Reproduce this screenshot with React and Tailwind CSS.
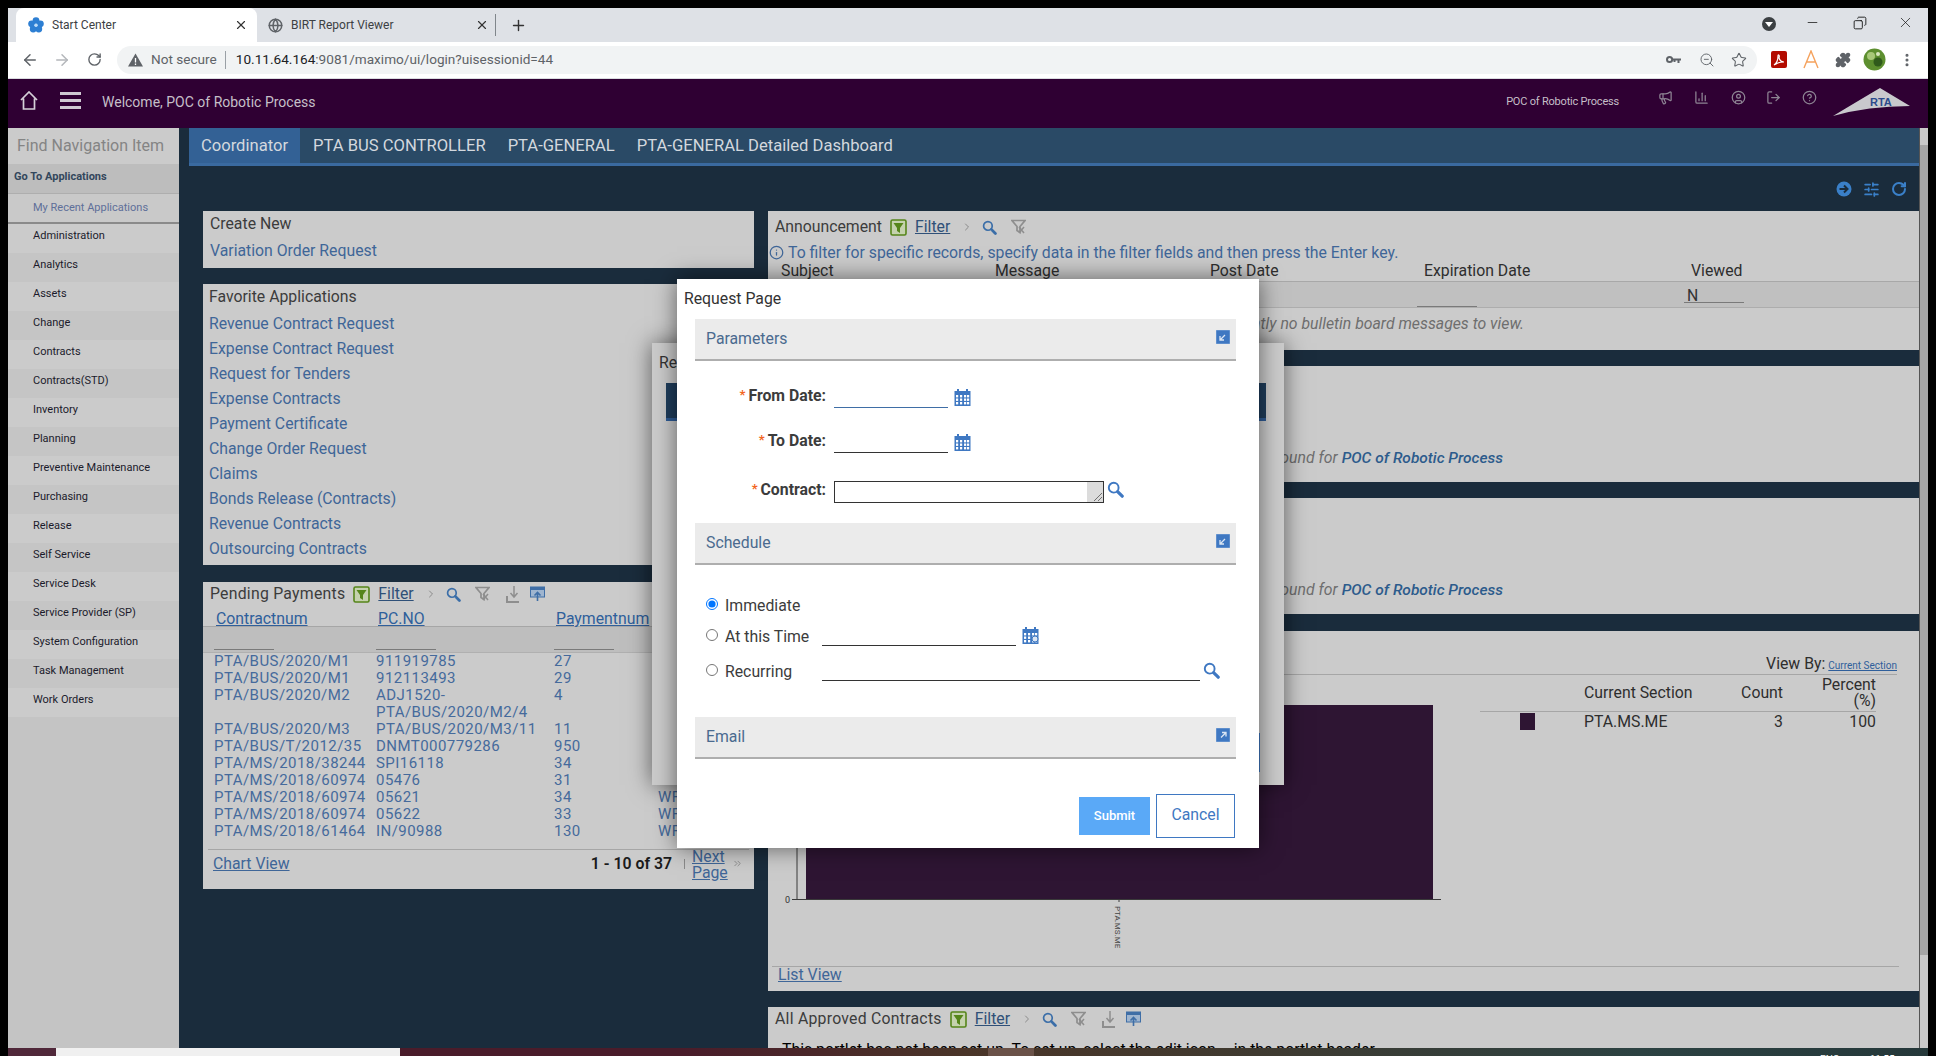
import { ArrowLeft, ArrowRight, RotateCw, Star, Puzzle, EllipsisVertical, X, Plus, Minus, Globe, ZoomOut, Megaphone, ChartColumn, CircleUser, LogOut, CircleHelp, SlidersHorizontal, Info, ChevronRight, ChevronsRight, Copy } from 'lucide-react';

const navItems = ['Administration', 'Analytics', 'Assets', 'Change', 'Contracts', 'Contracts(STD)', 'Inventory', 'Planning', 'Preventive Maintenance', 'Purchasing', 'Release', 'Self Service', 'Service Desk', 'Service Provider (SP)', 'System Configuration', 'Task Management', 'Work Orders'];

const favorites = ['Revenue Contract Request', 'Expense Contract Request', 'Request for Tenders', 'Expense Contracts', 'Payment Certificate', 'Change Order Request', 'Claims', 'Bonds Release (Contracts)', 'Revenue Contracts', 'Outsourcing Contracts'];

const payments = [
  ['PTA/BUS/2020/M1', '911919785', '27', ''],
  ['PTA/BUS/2020/M1', '912113493', '29', ''],
  ['PTA/BUS/2020/M2', 'ADJ1520-', '4', ''],
  ['', 'PTA/BUS/2020/M2/4', '', ''],
  ['PTA/BUS/2020/M3', 'PTA/BUS/2020/M3/11', '11', ''],
  ['PTA/BUS/T/2012/35', 'DNMT000779286', '950', ''],
  ['PTA/MS/2018/38244', 'SPI16118', '34', ''],
  ['PTA/MS/2018/60974', '05476', '31', 'WF'],
  ['PTA/MS/2018/60974', '05621', '34', 'WF'],
  ['PTA/MS/2018/60974', '05622', '33', 'WF'],
  ['PTA/MS/2018/61464', 'IN/90988', '130', 'WF'],
];

function FilterIcon() {
  return (
    <svg width="17" height="17" viewBox="0 0 17 17" className="shrink-0">
      <rect x="1" y="1" width="15" height="15" rx="1.5" fill="#c5d2ae" stroke="#55851a" strokeWidth="1.6" />
      <path d="M3.5 4h10L10 9v5l-3-2V9z" fill="#55851a" />
    </svg>
  );
}

function SearchIcon({ color = '#3b6ea8', size = 16 }) {
  return (
    <svg width={size} height={size} viewBox="0 0 16 16" className="shrink-0">
      <circle cx="6.3" cy="6.3" r="4.6" fill="none" stroke={color} strokeWidth="1.8" />
      <path d="M10 10l4.3 4.3" stroke={color} strokeWidth="3" strokeLinecap="round" />
    </svg>
  );
}

function ClearFilterIcon() {
  return (
    <svg width="15" height="16" viewBox="0 0 15 16" className="shrink-0">
      <path d="M1 1.5h13L9 7.5v6l-3-2v-4z" fill="none" stroke="#8e8e8e" strokeWidth="1.7" />
      <path d="M8 8l5 6M13 8l-5 6" stroke="#8e8e8e" strokeWidth="1.5" />
    </svg>
  );
}

function DownloadIcon() {
  return (
    <svg width="14" height="17" viewBox="0 0 14 17" className="shrink-0">
      <path d="M8 0v10M4.5 7L8 11l3.5-4" fill="none" stroke="#8e8e8e" strokeWidth="1.5" />
      <path d="M1 10v6h12" fill="none" stroke="#8e8e8e" strokeWidth="2" />
    </svg>
  );
}

function ExportIcon() {
  return (
    <svg width="15" height="16" viewBox="0 0 15 16" className="shrink-0">
      <rect x="0.5" y="1" width="14" height="10" fill="#9fb5cf" stroke="#3f6ea6" />
      <rect x="0.5" y="1" width="14" height="3" fill="#3f6ea6" />
      <path d="M7.5 15V7M4.5 9.5l3-3 3 3" fill="none" stroke="#3f6ea6" strokeWidth="1.6" />
    </svg>
  );
}

function CalendarIcon({ check }) {
  return (
    <svg width="17" height="17" viewBox="0 0 17 17" className="shrink-0">
      <rect x="0.5" y="2" width="16" height="15" fill="#3f78c2" />
      <rect x="3" y="0" width="2" height="4" fill="#3f78c2" />
      <rect x="12" y="0" width="2" height="4" fill="#3f78c2" />
      {[2, 6, 10, 13].map((x) => [6, 9.5, 13].map((y) => <rect key={`${x}-${y}`} x={x} y={y} width="2.2" height="2.4" fill="#fff" />))}
      {check && <circle cx="13" cy="12" r="3" fill="#dbe6f4" stroke="#3f78c2" />}
    </svg>
  );
}

function CollapseIcon({ open }) {
  return (
    <svg width="14" height="14" viewBox="0 0 14 14">
      <rect width="14" height="14" fill="#3f78c2" stroke="#a9c3e3" strokeWidth="0.6" />
      {open ? <path d="M5 9.5l4.5-4.5M6 4.5h4v4" fill="none" stroke="#dbe6f4" strokeWidth="1.3" /> : <path d="M9 5L4.5 9.5M4 6v4h4" fill="none" stroke="#dbe6f4" strokeWidth="1.3" />}
    </svg>
  );
}

function Flower() {
  return (
    <svg width="16" height="16" viewBox="0 0 16 16" className="shrink-0">
      {[[8, 3.6], [12.4, 6.8], [10.8, 12], [5.2, 12], [3.6, 6.8]].map(([cx, cy]) => <circle key={cx + cy} cx={cx} cy={cy} r="3.4" fill="#2d7fd3" />)}
      <circle cx="8" cy="8.2" r="1.7" fill="#bcdcf8" />
    </svg>
  );
}

function ChromeBar() {
  return (
    <>
      <div className="flex h-[34px] items-end bg-[#dee1e6] pl-2 text-[12px] text-[#3c4043]">
        <div className="flex h-[34px] w-[241px] items-center rounded-t-lg bg-white pl-3 pr-[9px]">
          <Flower />
          <span className="ml-[8px] flex-1">Start Center</span>
          <X size={14} strokeWidth={2} color="#333" />
        </div>
        <div className="flex h-[34px] w-[238px] items-center pl-[11px] pr-[6px]">
          <Globe size={15} strokeWidth={2.4} color="#5f6368" />
          <span className="ml-[8px] flex-1">BIRT Report Viewer</span>
          <X size={14} strokeWidth={2} color="#333" />
        </div>
        <div className="mb-[6px] h-[22px] w-px bg-[#80868b]" />
        <Plus size={17} strokeWidth={2} color="#333" className="mb-[8px] ml-[14px]" />
        <div className="ml-auto flex items-center self-start pt-[6px]">
          <div className="mt-[3px] flex h-[14px] w-[14px] items-center justify-center rounded-full bg-[#3c4043]">
            <div className="h-0 w-0 border-x-[4px] border-t-[5px] border-x-transparent border-t-white" />
          </div>
          <Minus size={15} strokeWidth={1.2} color="#111" className="ml-[29px]" />
          <Copy size={14} strokeWidth={1.5} color="#111" className="ml-[33px] -scale-x-100" />
          <X size={17} strokeWidth={1} color="#111" className="ml-[30px] mr-[14px]" />
        </div>
      </div>
      <div className="flex h-[37px] items-center border-b border-[#dadce0] bg-white pb-px">
        <ArrowLeft size={18} color="#5f6368" strokeWidth={2} className="ml-[13px]" />
        <ArrowRight size={18} color="#b4b7bb" strokeWidth={2} className="ml-[14px]" />
        <RotateCw size={15} color="#5f6368" strokeWidth={2.2} className="ml-[16px]" />
        <div className="ml-[15px] flex h-[28px] w-[1640px] items-center rounded-full bg-[#f1f3f4] pl-[11px] text-[13.6px]">
          <svg width="15" height="14" viewBox="0 0 15 14"><path d="M7.5 0.5L15 13.5H0z" fill="#5f6368" /><path d="M7.5 5v4.5M7.5 10.5v1.5" stroke="#fff" strokeWidth="1.3" /></svg>
          <span className="ml-[8px] text-[#5f6368]">Not secure</span>
          <div className="ml-[8px] h-[18px] w-px bg-[#9aa0a6]" />
          <span className="ml-[10px] text-[#202124]">10.11.64.164</span>
          <span className="text-[#5f6368]">:9081/maximo/ui/login?uisessionid=44</span>
          <div className="ml-auto flex items-center pr-[10px]">
            <svg width="15" height="9" viewBox="0 0 15 9"><circle cx="3.6" cy="4.5" r="2.6" fill="none" stroke="#5f6368" strokeWidth="2" /><path d="M6 3.5h9v2h-1.5v2.5h-2V5.5H9.5v1.5h-2v-1.5H6z" fill="#5f6368" /></svg>
            <ZoomOut size={16} color="#5f6368" strokeWidth={1.4} className="ml-[18px]" />
            <Star size={16} color="#5f6368" strokeWidth={1.6} className="ml-[16px]" />
          </div>
        </div>
        <div className="ml-[14px] flex h-[17px] w-[16px] items-center justify-center rounded-[2px] bg-[#b30b00]">
          <svg width="12" height="12" viewBox="0 0 12 12"><path d="M1 11c3-2 4-6 4-9 0-2 2-1 1 2 1 3 3 4 5 4-2 0-5 0-8 2z" fill="none" stroke="#fff" strokeWidth="1.2" /></svg>
        </div>
        <svg width="16" height="19" viewBox="0 0 16 19" className="ml-[16px]"><path d="M1 18L8 1l7 17M4 12h8" fill="none" stroke="#f5a25d" strokeWidth="1.4" /></svg>
        <Puzzle size={16} color="#5f6368" fill="#5f6368" className="ml-[16px]" />
        <svg width="23" height="23" viewBox="0 0 23 23" className="ml-[12px]">
          <circle cx="11.5" cy="11.5" r="11" fill="#5d8f2f" />
          <circle cx="8" cy="8" r="4" fill="#a7c878" />
          <circle cx="15" cy="14" r="4.5" fill="#2f5a1b" />
          <circle cx="15" cy="6" r="2" fill="#d7e6bd" />
        </svg>
        <EllipsisVertical size={16} color="#5f6368" strokeWidth={2.6} className="ml-[13px]" />
      </div>
    </>
  );
}

function AppHeader() {
  return (
    <div className="flex h-[49px] items-center bg-[#2f0033] text-[#c5bfc8]">
      <svg width="18" height="19" viewBox="0 0 18 19" className="mb-[6px] ml-[12px]"><path d="M1 9l8-8 8 8M3.5 7.5V18h11V7.5" fill="none" stroke="#d5d0d8" strokeWidth="1.7" /></svg>
      <div className="mb-[6px] ml-[22px] flex w-[21px] flex-col gap-[4px]">
        <div className="h-[3px] bg-[#cfc9d2]" /><div className="h-[3px] bg-[#cfc9d2]" /><div className="h-[3px] bg-[#cfc9d2]" />
      </div>
      <span className="mb-[2px] ml-[21px] text-[14px]">Welcome, POC of Robotic Process</span>
      <span className="mb-[2px] ml-auto text-[11px] tracking-[-0.2px]">POC of Robotic Process</span>
      <Megaphone size={15} color="#8e8494" className="mb-[13px] ml-[39px]" />
      <ChartColumn size={15} color="#8e8494" className="mb-[13px] ml-[21px]" />
      <CircleUser size={15} color="#8e8494" className="mb-[13px] ml-[22px]" />
      <LogOut size={15} color="#8e8494" className="mb-[13px] ml-[20px]" />
      <CircleHelp size={15} color="#8e8494" className="mb-[13px] ml-[21px]" />
      <svg width="78" height="28" viewBox="0 0 78 28" className="mb-[4px] ml-[16px] mr-[17px]">
        <path d="M0 28Q30 10 47 0L77 18Q35 18 0 28z" fill="#c9c9cd" />
        <text x="37" y="18" fontSize="11" fontWeight="700" fill="#2c4a8c" fontFamily="Liberation Sans, sans-serif">RTA</text>
      </svg>
    </div>
  );
}

function Sidebar() {
  return (
    <aside className="flex w-[171px] shrink-0 flex-col bg-[#c4c4c4]">
      <div className="flex h-[36px] items-center bg-[#cbcbcb] pl-[9px] text-[16px] text-[#848484]">Find Navigation Item</div>
      <div className="flex h-[30px] items-center border-b border-[#aeaeae] bg-[#bdbdbd] pb-[2px] pl-[6px] text-[11px] font-bold text-[#33475c]">Go To Applications</div>
      <div className="flex h-[30px] items-center border-b-2 border-[#8a8a8a] bg-[#c9c9c9] pl-[25px] text-[11px] text-[#5e6f99]">My Recent Applications</div>
      {navItems.map((name, i) => (
        <div key={name} className={`flex h-[29px] items-center pb-[4px] pl-[25px] text-[11px] text-[#1b1b2b] ${i % 2 === 0 ? 'bg-[#cbcbcb]' : 'bg-[#c5c5c5]'}`}>{name}</div>
      ))}
    </aside>
  );
}

function PortletTitle({ title, extra }) {
  return (
    <div className="flex h-[24px] items-center text-[15.8px] text-[#3c3c3c]">
      <span className={extra ? 'tracking-[0.25px]' : ''}>{title}</span>
      <span className="ml-[8px]"><FilterIcon /></span>
      <span className="ml-[8px] text-[#2f5078] underline">Filter</span>
      <ChevronRight size={12} color="#8a8a8a" className="ml-[11px]" />
      <span className="ml-[9px]"><SearchIcon size={15} /></span>
      <span className="ml-[14px]"><ClearFilterIcon /></span>
      {extra && <span className="ml-[16px]"><DownloadIcon /></span>}
      {extra && <span className="ml-[10px]"><ExportIcon /></span>}
    </div>
  );
}

function LeftColumn() {
  return (
    <div className="flex w-[551px] shrink-0 flex-col">
      <section className="h-[57px] shrink-0 bg-[#cbcbcb] pl-[7px] pt-[3px]">
        <div className="flex h-[20px] items-center text-[15.8px] text-[#3c3c3c]">Create New</div>
        <div className="mt-[7px] text-[15.8px] leading-[20px] text-[#3f6698]">Variation Order Request</div>
      </section>
      <section className="mt-[16px] h-[281px] shrink-0 bg-[#cbcbcb] pl-[6px] pt-[3px]">
        <div className="flex h-[20px] items-center text-[15.8px] text-[#3c3c3c]">Favorite Applications</div>
        <div className="mt-[4px] flex flex-col">
          {favorites.map((name) => <div key={name} className="h-[25px] text-[15.8px] leading-[25px] text-[#3f6698]">{name}</div>)}
        </div>
      </section>
      <section className="mt-[17px] flex h-[307px] shrink-0 flex-col bg-[#cbcbcb] text-[15.8px]">
        <div className="h-[25px] pl-[7px]"><PortletTitle title="Pending Payments" extra /></div>
        <div className="grid h-[20px] grid-cols-[162px_178px_104px] items-center border-b border-[#a6a6a6] pb-[2px] pl-[13px] text-[#2f5f9b] underline">
          <span>Contractnum</span><span>PC.NO</span><span>Paymentnum</span>
        </div>
        <div className="grid h-[26px] grid-cols-[162px_178px_104px] items-end border-b border-[#b0b0b0] bg-[#bebebe] pb-[2px] pl-[11px]">
          <div className="w-[60px] border-b border-[#7a7a7a]" /><div className="w-[60px] border-b border-[#7a7a7a]" /><div className="w-[60px] border-b border-[#7a7a7a]" />
        </div>
        <div className="pl-[11px]">
          {payments.map((row, i) => (
            <div key={i} className="grid h-[17px] grid-cols-[162px_178px_104px_60px] text-[15px] leading-[17px] tracking-[0.45px] text-[#456a9c]">
              {row.map((cell, j) => <span key={j} className="whitespace-nowrap">{cell}</span>)}
            </div>
          ))}
        </div>
        <div className="mx-[5px] mt-[9px] flex h-[39px] items-start border-t border-[#a6a6a6] pl-[5px] pt-[3px]">
          <span className="mt-[1px] leading-[20px] text-[#3f6698] underline">Chart View</span>
          <b className="ml-auto mt-[1px] font-semibold leading-[20px] text-[#1a1a1a]">1 - 10 of 37</b>
          <div className="ml-[12px] mt-[6px] h-[10px] w-px bg-[#8a8a8a]" />
          <div className="-mt-[4px] ml-[7px] w-[36px] leading-[16px] text-[#3f6698] underline">Next Page</div>
          <ChevronsRight size={11} color="#8a8a8a" className="ml-[4px] mr-[6px] mt-[5px]" />
        </div>
      </section>
    </div>
  );
}

function NotFound() {
  return (
    <section className="mt-[16px] flex h-[116px] shrink-0 items-end justify-end bg-[#cbcbcb] pb-[12px] pr-[416px] text-[15.8px] leading-[24px] italic text-[#6e6e6e]">
      No records found for&nbsp;<span className="text-[15.5px] font-medium text-[#2c5b8c]">POC of Robotic Process</span>
    </section>
  );
}

function AnnouncementPortlet() {
  return (
    <section className="h-[139px] shrink-0 bg-[#cbcbcb] text-[15.8px]">
      <div className="pl-[7px] pt-[4px]"><PortletTitle title="Announcement" /></div>
      <div className="flex h-[27px] items-center pl-px text-[#3f6698]">
        <Info size={15} color="#3f6698" />
        <span className="ml-[4px]">To filter for specific records, specify data in the filter fields and then press the Enter key.</span>
      </div>
      <div className="grid h-[16px] grid-cols-[214px_215px_214px_267px_200px] items-start border-b border-[#a8a8a8] pl-[13px] leading-[9px] text-[#2e2e2e]">
        <span>Subject</span><span>Message</span><span>Post Date</span><span>Expiration Date</span><span>Viewed</span>
      </div>
      <div className="grid h-[26px] grid-cols-[649px_267px_200px] border-b border-[#adadad] bg-[#c0c0c0]">
        <span />
        <div className="mt-[19px] w-[60px] border-b border-[#7a7a7a]" />
        <div className="h-[21px] w-[60px] border-b border-[#7a7a7a] pl-[3px] leading-[27px] text-[#333]">N</div>
      </div>
      <div className="flex h-[29px] items-center justify-end pr-[395px] pt-[3px] italic text-[#6e6e6e]">There are currently no bulletin board messages to view.</div>
    </section>
  );
}

function ChartPortlet() {
  return (
    <section className="mt-[17px] flex h-[360px] shrink-0 flex-col bg-[#cbcbcb] text-[15.8px]">
      <div className="ml-[8px] mr-[22px] flex h-[44px] shrink-0 items-end justify-end border-b border-[#a6a6a6] leading-[20px] text-[#2e2e2e]">
        <span>View By:</span>
        <span className="ml-[3px] text-[10px] leading-[16px] text-[#2f5f9b] underline">Current Section</span>
      </div>
      <div className="flex h-[291px] shrink-0">
        <svg width="712" height="291" viewBox="0 0 712 291" className="shrink-0">
          <rect x="38" y="30" width="627" height="194" fill="#2e1533" />
          <path d="M29 0V225M24 224.5H673" stroke="#3a3a3a" strokeWidth="1" fill="none" />
          <text x="17" y="228" fontSize="9" fill="#333" fontFamily="Roboto, sans-serif">0</text>
          <path d="M351 225v2" stroke="#3a3a3a" />
          <text transform="translate(347 231) rotate(90)" fontSize="8" fill="#444" fontFamily="Roboto, sans-serif">PTA.MS.ME</text>
        </svg>
        <div className="w-[396px] text-[#2e2e2e]">
          <div className="grid h-[37px] grid-cols-[104px_115px_84px_93px] items-center border-b border-[#a6a6a6] leading-[16px]">
            <span /><span>Current Section</span><span className="text-right">Count</span><span className="text-right">Percent<br />(%)</span>
          </div>
          <div className="mt-px grid h-[17px] grid-cols-[104px_115px_84px_93px] items-center leading-[17px]">
            <div className="ml-[40px] h-[17px] w-[15px] bg-[#2e1533]" />
            <span>PTA.MS.ME</span><span className="text-right">3</span><span className="text-right">100</span>
          </div>
        </div>
      </div>
      <div className="ml-[4px] mr-[20px] border-t border-[#a6a6a6] leading-[16px]">
        <span className="ml-[6px] text-[#3f6698] underline">List View</span>
      </div>
    </section>
  );
}

function RightColumn() {
  return (
    <div className="ml-[14px] flex min-w-0 flex-1 flex-col">
      <AnnouncementPortlet />
      <NotFound />
      <NotFound />
      <ChartPortlet />
      <section className="mt-[16px] h-[60px] shrink-0 bg-[#cbcbcb] pl-[7px] text-[15.8px]">
        <PortletTitle title="All Approved Contracts" extra />
        <div className="mt-[7px] flex pl-[7px] leading-[24px] text-black">
          <span>This portlet has not been set up. To set up, select the edit icon</span>
          <span className="ml-[18px]">in the portlet header.</span>
        </div>
      </section>
    </div>
  );
}

function SectionHead({ title, open }) {
  return (
    <div className="flex h-[42px] items-center justify-between border-b-2 border-[#aeaeae] bg-[#ebebeb] pl-[11px] pr-[6px] text-[15.8px] text-[#4a6a8f]">
      <span>{title}</span>
      <span className="-mt-[4px]"><CollapseIcon open={open} /></span>
    </div>
  );
}

function FieldLabel({ children }) {
  return (
    <span className="mb-[4px] flex justify-end text-[15.8px] font-bold leading-[16px] text-[#3c3c3c]">
      <i className="mr-[3px] text-[13px] not-italic leading-[14px] text-[#f26522]">*</i>{children}
    </span>
  );
}

function DateField({ label, active, className }) {
  return (
    <div className={`grid h-[21px] grid-cols-[131px_114px_auto] items-center gap-x-[8px] ${className}`}>
      <FieldLabel>{label}</FieldLabel>
      <div className={`h-[21px] border-b ${active ? 'border-[#3f6ea6]' : 'border-[#333]'}`} />
      <span className="-ml-[2px]"><CalendarIcon /></span>
    </div>
  );
}

function RequestDialog() {
  return (
    <div className="absolute left-[677px] top-[279px] z-20 flex h-[569px] w-[582px] flex-col bg-white pl-[18px] pr-[23px] shadow-[0_0_22px_rgba(0,0,0,0.55)]">
      <div className="-ml-[11px] flex h-[40px] items-center text-[15.8px] text-[#333]">Request Page</div>
      <SectionHead title="Parameters" />
      <div className="h-[162px] pt-[26px]">
        <DateField label="From Date:" active />
        <DateField label="To Date:" className="mt-[24px]" />
        <div className="mt-[28px] grid h-[22px] grid-cols-[131px_270px_auto] items-center gap-x-[8px]">
          <FieldLabel>Contract:</FieldLabel>
          <div className="flex h-[22px] justify-end border border-[#333]">
            <svg width="16" height="20" viewBox="0 0 16 20">
              <rect width="16" height="20" fill="#dcdcdc" />
              <path d="M7 19l8-8M11 19l4-4" stroke="#555" strokeWidth="0.8" />
            </svg>
          </div>
          <span className="-ml-[5px] -mt-[6px]"><SearchIcon color="#3f78c2" size={17} /></span>
        </div>
      </div>
      <SectionHead title="Schedule" />
      <div className="h-[152px] pl-[11px] pt-[31px] text-[15.8px] text-[#3c3c3c]">
        <label className="flex h-[20px] items-center">
          <input type="radio" name="when" defaultChecked className="-mt-[5px] h-[12px] w-[12px] accent-[#0075ff]" />
          <span className="ml-[7px]">Immediate</span>
        </label>
        <label className="mt-[11px] flex h-[20px] items-center">
          <input type="radio" name="when" className="-mt-[5px] h-[12px] w-[12px]" />
          <span className="ml-[7px] w-[97px]">At this Time</span>
          <div className="h-[18px] w-[194px] border-b border-[#333]" />
          <span className="-mt-[4px] ml-[6px]"><CalendarIcon check /></span>
        </label>
        <label className="mt-[15px] flex h-[20px] items-center">
          <input type="radio" name="when" className="-mt-[5px] h-[12px] w-[12px]" />
          <span className="ml-[7px] w-[97px]">Recurring</span>
          <div className="h-[18px] w-[378px] border-b border-[#333]" />
          <span className="-mt-[3px] ml-[3px]"><SearchIcon color="#3f78c2" size={17} /></span>
        </label>
      </div>
      <SectionHead title="Email" open />
      <div className="mr-px mt-[35px] flex items-center justify-end gap-[6px]">
        <button className="h-[38px] w-[71px] bg-[#5aa9f7] pb-px text-[13px] font-medium text-white">Submit</button>
        <button className="h-[44px] w-[79px] border border-[#3f78c2] pb-[3px] text-[15.8px] text-[#3f78c2]">Cancel</button>
      </div>
    </div>
  );
}

function BackDialog() {
  return (
    <div className="absolute left-[652px] top-[343px] z-10 h-[442px] w-[632px] bg-[#cbcbcb] pt-[8px] shadow-[0_0_22px_rgba(0,0,0,0.55)]">
      <div className="pl-[7px] text-[15.8px] leading-[24px] text-[#333]">Re</div>
      <div className="ml-[14px] mt-[8px] h-[38px] w-[600px] border-b-[3px] border-[#2f5c96] bg-[#1f3d5c]" />
      <div className="absolute left-[607px] top-[390px] h-[39px] w-px bg-[#3f78c2]" />
    </div>
  );
}

function Scrollbar() {
  return (
    <div className="flex w-[9px] shrink-0 flex-col border-l border-[#555] bg-[#c8c8c8]">
      <div className="h-[17px] bg-[#c9c9c9]" />
      <div className="h-[810px] bg-[#a5a5a5]" />
    </div>
  );
}

export default function App() {
  return (
    <div className="relative h-[1056px] w-[1936px] overflow-hidden bg-black px-2 pt-2 font-['Roboto',sans-serif]">
      <ChromeBar />
      <AppHeader />
      <div className="flex h-[920px] overflow-hidden bg-[#1a2c3c]">
        <Sidebar />
        <main className="ml-[10px] flex min-w-0 flex-1 flex-col">
          <nav className="flex h-[38px] shrink-0 border-b-[3px] border-[#3a6aa0] bg-[#2a4a66] pt-px text-[16.6px] text-[#d3d8de]">
            <div className="-mt-px flex w-[111px] items-center justify-center bg-[#336195] pt-px">Coordinator</div>
            <div className="ml-[2px] flex items-center px-[11px]">PTA BUS CONTROLLER</div>
            <div className="flex items-center px-[11px]">PTA-GENERAL</div>
            <div className="flex items-center px-[11px]">PTA-GENERAL Detailed Dashboard</div>
          </nav>
          <div className="flex h-[45px] shrink-0 items-center justify-end gap-[11px] pr-[12px] pt-[1px]">
            <svg width="16" height="16" viewBox="0 0 16 16"><circle cx="8" cy="8" r="7.5" fill="#3a80c9" /><path d="M3.5 8h8M8 4.5L11.5 8 8 11.5" fill="none" stroke="#1a2c3c" strokeWidth="2" /></svg>
            <SlidersHorizontal size={17} color="#3a80c9" strokeWidth={2.4} />
            <RotateCw size={16} color="#3a80c9" strokeWidth={3} />
          </div>
          <div className="flex min-h-0 flex-1 pl-[14px]">
            <LeftColumn />
            <RightColumn />
          </div>
        </main>
        <Scrollbar />
      </div>
      <div className="flex h-[8px] overflow-hidden bg-[linear-gradient(90deg,#4a1c2a_0%,#4a1c2a_35%,#4a3528_50%,#3f3a30_65%,#2c4242_85%,#25383a_100%)] text-[10px] leading-[14px] text-white">
        <div className="w-[48px] bg-[#50283a]" />
        <div className="w-[344px] bg-[#f0f0f0]" />
        <div className="ml-[588px] w-[46px] bg-[#6a5248]" />
        <span className="ml-[786px] mt-[5px]">ENG</span>
        <span className="ml-[30px] mt-[5px]">11:55</span>
      </div>
      <BackDialog />
      <RequestDialog />
    </div>
  );
}
